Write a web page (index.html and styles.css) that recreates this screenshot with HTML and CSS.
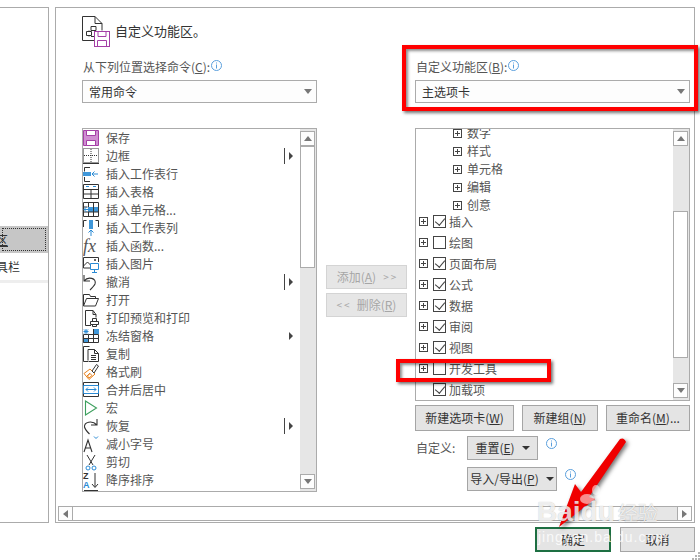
FILE: index.html
```html
<!DOCTYPE html>
<html lang="zh">
<head>
<meta charset="utf-8">
<title>自定义功能区</title>
<link rel="stylesheet" href="styles.css">
</head>
<body>
<div class="dialog">
  <div class="panels">
    <nav class="side">
      <div class="side-item side-selected"><span class="side-text"><u>自定义功能区</u></span></div>
      <div class="side-item"><span class="side-text side-text2">快速访问工具栏</span></div>
      <div class="side-strip"></div>
    </nav>
    <main class="main">
      <header class="head">
        <svg class="head-icon" viewBox="0 0 28 31">
          <path class="ln" d="M12 24.500H.5V.5H13l7 7v7M13 .5v7h7"/>
          <path class="ln" d="M9 10.500h5v4H9zM4.500 15.500h5v4h-5zM9 20.500h3M7 14.500v1M7 19.500v1"/>
          <rect class="sv" x="12.500" y="15.500" width="15" height="15"/>
          <path class="sv" d="M16 15.500v5h8v-5M15.500 30.500v-6h9v6"/>
        </svg>
        <span class="head-title">自定义功能区。</span>
      </header>
      <div class="cols">
        <section class="col-left">
          <div class="label"><span>从下列位置选择命令(<u>C</u>):</span><svg class="info" viewBox="0 0 11 11"><circle cx="5.500" cy="5.500" r="5"/><path d="M5.500 2.500v1M5.500 4.500v4"/></svg></div>
          <div class="select"><span>常用命令</span><i class="tri"></i></div>
          <div class="list list-left">
            <ul class="rows">
              <li class="row"><svg class="ic" viewBox="0 0 16 17"><path fill="#d08ed2" stroke="#a43fa6" d="M.5.500h15v15H.5z"/><path fill="#fff" stroke="#a43fa6" d="M3.500.500h9v5h-9zM3.500 10.500h9v5h-9z"/></svg>保存</li>
              <li class="row"><svg class="ic" viewBox="0 0 16 17"><path class="dot" d="M.5.500h15v14H.5zM8 1v14M1 7.500h14"/><path class="ln" d="M0 15.500h16"/></svg>边框<span class="sub sub-split"></span></li>
              <li class="row"><svg class="ic" viewBox="0 0 16 17"><path class="ln" d="M7 1.500H1.500v4M1.500 11v4.500H7"/><path class="bl" d="M0 6h8v4H0z"/><path class="ar" d="M15 8H9M11.500 5.500 9 8l2.500 2.500"/></svg>插入工作表行</li>
              <li class="row"><svg class="ic" viewBox="0 0 16 17"><path class="ln" d="M.5.500h15v14H.5zM.5 5.500h15M.5 10h15M8 5.500v9"/><path class="ar" d="M3 2.500h3M10 2.500h3"/></svg>插入表格</li>
              <li class="row"><svg class="ic" viewBox="0 0 16 17"><path class="bl" d="M5 5h10v5H5z"/><path class="ln" d="M.5.500h15v14H.5zM.5 5h4M.5 10h15M5.500.5V5M5.500 10v4.500M10.500.5v14"/><path class="ar" d="M9 7.500H1M3.500 5 1 7.500 3.500 10"/></svg>插入单元格...</li>
              <li class="row"><svg class="ic" viewBox="0 0 16 17"><path class="ln" d="M.5 7V.5h3M15.500 7V.5h-3"/><path class="bl" d="M6 0h4v9H6z"/><path class="ar" d="M8 16v-6M5.500 12.500 8 10l2.500 2.500"/></svg>插入工作表列</li>
              <li class="row"><svg class="ic" viewBox="0 0 16 17"><text class="fx" x="0" y="14">fx</text></svg>插入函数...</li>
              <li class="row"><svg class="ic" viewBox="0 0 16 17"><path class="ln" d="M7 12H.5V1.500H15.500V6M.5 10l4-4 3 3"/><path class="ar" d="M7.500 7.500h8v6h-8zM11.500 13.500v3M9 16.500h5"/><circle cx="12" cy="4" r="1" fill="#333"/></svg>插入图片</li>
              <li class="row"><svg class="ic" viewBox="0 0 16 17"><path class="ln2" d="M1 1v6h6M1 7c4-5 13-3 11 3-1 2-3 4-5 6"/></svg>撤消<span class="sub sub-split"></span></li>
              <li class="row"><svg class="ic" viewBox="0 0 16 17"><path class="ln" d="M.5 14V2.500h6l1 2h5V7M.5 14 3.500 6.500H15.500L12.500 14z"/></svg>打开</li>
              <li class="row"><svg class="ic" viewBox="0 0 16 17"><path class="ln" d="M8 15.500H2.500V.5H10l3 4v3M10 .5v4h3"/><path class="ln" d="M7.500 11.500h8v3h-8zM9.500 11.500v-3h4v3M9.500 14.500v2h4v-2"/></svg>打印预览和打印</li>
              <li class="row"><svg class="ic" viewBox="0 0 16 17"><path class="bl" d="M10 1h6v5h-6zM0 10h5v5H0z"/><path class="ln" d="M5.500 6.500h10v8H.5v-8h5zM5.500 6.500v8M10.500 1v13.500M.5 10.500h15"/><path class="ar" d="M3 1v5M.5 3.500h5M1 1.500l4 4M5 1.500l-4 4"/></svg>冻结窗格<span class="sub"></span></li>
              <li class="row"><svg class="ic" viewBox="0 0 16 17"><path class="ln" d="M5 15.500H.5V.5h6M5 14.500V3.500h6.500l4 4v8h-10M11.500 3.500v4h4M8 9.500h5M8 11.500h5M8 13.500h5"/></svg>复制</li>
              <li class="row"><svg class="ic" viewBox="0 0 16 17"><path class="or" d="M1 9.500 7 5l5 5-6 5.500zM4 12l3-3"/><path class="or" d="M4.500 12 7 9.500 9 11.500 6 14z" fill="#f0a030"/><path class="ln" d="m9 7 4.500-6.500 2 1.500L11 9z"/></svg>格式刷</li>
              <li class="row"><svg class="ic" viewBox="0 0 16 17"><path class="ln" d="M.5.500h15v14H.5z"/><path class="ar" d="M.5 3.500h15v8H.5zM3 7.500h10M5 5.500l-2 2 2 2M11 5.500l2 2-2 2"/></svg>合并后居中</li>
              <li class="row"><svg class="ic" viewBox="0 0 16 17"><path fill="none" stroke="#3c9f5d" stroke-width="1.100" d="M2.500 1v14l11-7z"/></svg>宏</li>
              <li class="row"><svg class="ic" viewBox="0 0 16 17"><path class="ln2" d="M14 1v6H8M14 7C9 2 1 4 1.500 9c.5 2 3 5 5 7"/></svg>恢复<span class="sub sub-split"></span></li>
              <li class="row"><svg class="ic" viewBox="0 0 16 17"><path class="ln2" d="m1 16 4-12 4 12M2.500 12h5"/><path class="ar" d="m11 .5 2 2 2-2"/></svg>减小字号</li>
              <li class="row"><svg class="ic" viewBox="0 0 16 17"><path class="ln" d="m4 1 6 10M12 1 6 11"/><circle class="ar" cx="5" cy="14" r="2"/><circle class="ar" cx="11" cy="14" r="2"/></svg>剪切</li>
              <li class="row"><svg class="ic" viewBox="0 0 16 17"><text class="za" x="0" y="7">Z</text><text class="za za-b" x="0" y="16">A</text><path class="ln" d="M12 1v14M9 12l3 3.500 3-3.500"/></svg>降序排序</li>
              <li class="row"><svg class="ic" viewBox="0 0 16 17"><path class="ln" d="M1 .5h14"/></svg></li>
            </ul>
            <div class="vscroll">
              <div class="sb-btn"><i class="tri tri-up"></i></div>
              <div class="thumb thumb-left"></div>
              <div class="track"></div>
              <div class="sb-btn"><i class="tri"></i></div>
            </div>
          </div>
        </section>
        <section class="col-mid">
          <div class="mid-btn">添加(<u>A</u>)<span class="chev chev-r">&gt;&gt;</span></div>
          <div class="mid-btn"><span class="chev chev-l">&lt;&lt;</span>删除(<u>R</u>)</div>
        </section>
        <section class="col-right">
          <div class="label"><span>自定义功能区(<u>B</u>):</span><svg class="info" viewBox="0 0 11 11"><circle cx="5.500" cy="5.500" r="5"/><path d="M5.500 2.500v1M5.500 4.500v4"/></svg></div>
          <div class="select"><span>主选项卡</span><i class="tri"></i></div>
          <div class="list list-right">
            <ul class="tree">
              <li class="child"><i class="plus"></i>数字</li>
              <li class="child"><i class="plus"></i>样式</li>
              <li class="child"><i class="plus"></i>单元格</li>
              <li class="child"><i class="plus"></i>编辑</li>
              <li class="child child-last"><i class="plus"></i>创意</li>
              <li class="top"><i class="plus"></i><i class="check on"></i>插入</li>
              <li class="top"><i class="plus"></i><i class="check"></i>绘图</li>
              <li class="top"><i class="plus"></i><i class="check on"></i>页面布局</li>
              <li class="top"><i class="plus"></i><i class="check on"></i>公式</li>
              <li class="top"><i class="plus"></i><i class="check on"></i>数据</li>
              <li class="top"><i class="plus"></i><i class="check on"></i>审阅</li>
              <li class="top"><i class="plus"></i><i class="check on"></i>视图</li>
              <li class="top"><i class="plus"></i><i class="check"></i>开发工具</li>
              <li class="top"><i class="plus plus-none"></i><i class="check on"></i>加载项</li>
            </ul>
            <div class="vscroll">
              <div class="sb-btn"><i class="tri tri-up"></i></div>
              <div class="track track-top"></div>
              <div class="thumb thumb-right"></div>
              <div class="track"></div>
              <div class="sb-btn"><i class="tri"></i></div>
            </div>
          </div>
          <div class="btn-row">
            <div class="btn btn-new">新建选项卡(<u>W</u>)</div>
            <div class="btn btn-group">新建组(<u>N</u>)</div>
            <div class="btn btn-rename">重命名(<u>M</u>)...</div>
          </div>
          <div class="cust-row">
            <span class="cust-label">自定义:</span>
            <div class="btn btn-reset">重置(<u>E</u>)<i class="caret"></i></div>
            <svg class="info info-lg" viewBox="0 0 11 11"><circle cx="5.500" cy="5.500" r="5"/><path d="M5.500 2.500v1M5.500 4.500v4"/></svg>
          </div>
          <div class="cust-row cust-row2">
            <div class="btn btn-io">导入/导出(<u>P</u>)<i class="caret"></i></div>
            <svg class="info info-lg" viewBox="0 0 11 11"><circle cx="5.500" cy="5.500" r="5"/><path d="M5.500 2.500v1M5.500 4.500v4"/></svg>
          </div>
        </section>
      </div>
      <div class="hscroll">
        <div class="hs-btn"><i class="tri tri-left"></i></div>
        <div class="hs-thumb"></div>
        <div class="hs-track"></div>
        <div class="hs-btn"><i class="tri tri-right"></i></div>
      </div>
    </main>
  </div>
  <footer class="foot">
    <div class="btn btn-ok">确定</div>
    <div class="btn btn-cancel">取消</div>
  </footer>
</div>
<svg class="grip" viewBox="0 0 8 8"><path d="M6 0h2v2H6zM3 3h2v2H3zM6 3h2v2H6zM0 6h2v2H0zM3 6h2v2H3zM6 6h2v2H6z"/></svg>
<div class="mark mark-top"></div>
<div class="mark mark-dev"></div>
<svg class="arrow" viewBox="0 0 700 560"><path fill="#f00000" d="M559 527 575 484l6 8 39-53q4-2 6 3l-37 55 6 2z"/></svg>
<svg class="paw" viewBox="0 0 700 560"><ellipse cx="587" cy="499" rx="7" ry="5"/><ellipse cx="596" cy="490" rx="4" ry="5"/><ellipse cx="607" cy="492" rx="4" ry="5"/><ellipse cx="613" cy="502" rx="3" ry="4"/><ellipse cx="603" cy="509" rx="8" ry="7"/></svg>
<div class="wm wm-big">Baidu<span class="wm-cn">经验</span></div>
<div class="wm wm-small">jingyan.baidu.com</div>
</body>
</html>
```
FILE: styles.css
```css
* { box-sizing: border-box; }
html, body { margin: 0; padding: 0; }
body {
  width: 700px;
  height: 560px;
  overflow: hidden;
  position: relative;
  background: #fff;
  color: #444;
  font: 12px/16px "Noto Sans CJK SC", "Noto Sans", sans-serif;
}
ul { list-style: none; margin: 0; padding: 0; }
u { text-underline-offset: 1px; }
i { display: block; font-style: normal; }

.dialog { padding-top: 7px; }
.panels { display: flex; gap: 6px; }

.side {
  width: 49px;
  height: 516px;
  padding-top: 218px;
  border: 1px solid #ababab;
  border-left: 0;
  background: #fff;
  overflow: hidden;
}
.side-item { height: 27px; line-height: 27px; white-space: nowrap; color: #333; }
.side-selected { background: #c6c6c6; outline: 1px dotted #333; outline-offset: -3px; }
.side-text { display: block; margin-left: -64px; }
.side-strip { height: 3px; background: #eee; }

.main {
  width: 640px;
  height: 516px;
  padding-top: 8px;
  border: 1px solid #ababab;
}
.head { display: flex; align-items: center; gap: 6px; height: 30px; margin: 0 0 13px 26px; }
.head-icon { width: 28px; height: 31px; flex: none; margin-top: 1px; margin-right: -1px; }
.head-title { font-size: 13px; color: #333; }

.ln { fill: none; stroke: #333; stroke-width: 1; }
.ln2 { fill: none; stroke: #333; stroke-width: 1.100; }
.sv { fill: none; stroke: #a43fa6; stroke-width: 1; }
.dot { fill: none; stroke: #333; stroke-dasharray: 1 1; }
.bl { fill: #3f97d9; }
.ar { fill: none; stroke: #2a8ad4; stroke-width: 1; }
.or { fill: none; stroke: #e8821e; stroke-width: 1; }
.fx { font: italic 18px "Liberation Serif", serif; fill: #555; }
.za { font: bold 9px "Liberation Sans", sans-serif; fill: #333; }
.za-b { fill: #2a8ad4; }

.cols { display: flex; padding-left: 26px; height: 433px; }
.col-left { width: 235px; flex: none; }
.col-mid { width: 81px; margin: 0 8px 0 9px; padding-top: 206px; flex: none; display: flex; flex-direction: column; gap: 4px; }
.col-right { width: 275px; flex: none; }

.label { display: flex; align-items: flex-start; gap: 1px; height: 16px; margin-left: 1px; margin-bottom: 5px; color: #555; }
.info { width: 11px; height: 11px; flex: none; margin-top: 1px; fill: none; stroke: #5a9fdc; stroke-width: 1; }
.info-lg { width: 11px; height: 11px; margin-top: 0; }

.select {
  display: flex;
  justify-content: space-between;
  align-items: center;
  height: 23px;
  padding: 0 3px 0 6px;
  border: 1px solid #ababab;
  background: #fdfdfd;
  margin-bottom: 25px;
  color: #333;
}
.tri { width: 0; height: 0; border-left: 4px solid transparent; border-right: 4px solid transparent; border-top: 5px solid #777; }
.select .tri { margin-right: 1px; }
.tri-up { border-top: 0; border-bottom: 5px solid #777; }
.tri-left { border: 0; border-top: 4px solid transparent; border-bottom: 4px solid transparent; border-right: 5px solid #777; }
.tri-right { border: 0; border-top: 4px solid transparent; border-bottom: 4px solid transparent; border-left: 5px solid #777; }

.list { display: flex; border: 1px solid #ababab; background: #fff; overflow: hidden; }
.list-left { height: 364px; }
.list-right { height: 273px; }

.rows { flex: 1; min-width: 0; height: 362px; overflow: hidden; }
.row { position: relative; display: flex; align-items: center; height: 18px; padding-left: 0; color: #555; white-space: nowrap; }
.ic { width: 16px; height: 17px; flex: none; margin-right: 7px; overflow: visible; }
.sub { position: absolute; left: 206px; top: 5px; width: 0; height: 0; border-top: 4px solid transparent; border-bottom: 4px solid transparent; border-left: 4px solid #444; }
.sub-split::before { content: ""; position: absolute; left: -9px; top: -8px; width: 1px; height: 16px; background: #444; }

.vscroll { width: 16px; flex: none; display: flex; flex-direction: column; background: #e6e6e6; padding-top: 2px; padding-bottom: 2px; }
.sb-btn { width: 15px; height: 15px; flex: none; display: flex; align-items: center; justify-content: center; background: #fdfdfd; border: 1px solid #ababab; }
.thumb { flex: none; background: #fff; border: 1px solid #ababab; width: 15px; }
.thumb-left { height: 122px; }
.thumb-right { height: 147px; }
.track { flex: 1; }
.track-top { flex: none; height: 65px; }

.mid-btn { height: 24px; display: flex; align-items: center; justify-content: center; background: #e6e6e6; border: 1px solid #d4d4d4; color: #a6a6a6; white-space: nowrap; }
.chev { font-size: 10px; letter-spacing: 2px; }
.chev-r { margin-left: 7px; margin-right: -2px; }
.chev-l { margin-right: 5px; }

.tree { flex: 1; min-width: 0; margin-top: -5px; color: #555; white-space: nowrap; }
.child { display: flex; align-items: center; height: 18px; padding-left: 37px; gap: 5px; }
.child-last { margin-bottom: -3px; }
.top { display: flex; align-items: center; height: 21px; padding-left: 3px; }
.plus {
  position: relative;
  width: 9px;
  height: 9px;
  flex: none;
  border: 1px solid #444;
  background: linear-gradient(#444, #444) center / 5px 1px no-repeat, linear-gradient(#444, #444) center / 1px 5px no-repeat;
}
.plus-none { visibility: hidden; }
.check { position: relative; width: 13px; height: 13px; flex: none; margin: 0 3px 0 5px; border: 1px solid #444; background: #fff; }
.check.on::after { content: ""; position: absolute; left: 3px; top: 0; width: 5px; height: 8px; border: solid #444; border-width: 0 1px 1px 0; transform: rotate(40deg); }

.btn-row { display: flex; gap: 8px; margin-top: 4px; }
.btn {
  display: flex;
  align-items: center;
  justify-content: center;
  height: 26px;
  background: #e4e4e4;
  border: 1px solid #a5a5a5;
  color: #333;
  white-space: nowrap;
}
.btn-new { width: 99px; }
.btn-group { width: 76px; }
.btn-rename { width: 84px; }

.cust-row { display: flex; align-items: flex-start; margin-top: 5px; height: 24px; }
.cust-row2 { margin-top: 7px; padding-left: 52px; }
.cust-label { width: 52px; padding-left: 1px; line-height: 24px; color: #555; }
.btn-reset { width: 71px; height: 24px; }
.btn-io { width: 90px; height: 24px; }
.caret { width: 0; height: 0; margin-left: 7px; border-left: 4px solid transparent; border-right: 4px solid transparent; border-top: 4px solid #333; }
.cust-row .info { margin: 2px 0 0 8px; }

.hscroll { display: flex; margin: 14px 0 0 2px; width: 634px; height: 15px; border: 1px solid #ababab; background: #e6e6e6; }
.hs-btn { width: 14px; flex: none; display: flex; align-items: center; justify-content: center; background: #fdfdfd; border-right: 1px solid #ababab; }
.hs-btn:last-child { border-right: 0; border-left: 1px solid #ababab; }
.hs-thumb { width: 547px; background: #fff; }
.hs-track { flex: 1; }

.foot { display: flex; justify-content: flex-end; gap: 9px; margin-top: 4px; padding-right: 5px; }
.btn-ok { width: 76px; height: 25px; border: 2px solid #1d6f42; }
.btn-cancel { width: 75px; height: 25px; }

.grip { position: absolute; left: 692px; top: 552px; width: 8px; height: 8px; fill: #b5b5b5; }

.mark { position: absolute; border: 4px solid #f00; box-shadow: 2px 2px 3px rgba(0, 0, 0, .55), inset 2px 2px 3px rgba(0, 0, 0, .45); }
.mark-top { left: 402px; top: 45px; width: 296px; height: 66px; }
.mark-dev { left: 396px; top: 359px; width: 155px; height: 23px; }

.arrow { position: absolute; left: 0; top: 0; width: 700px; height: 560px; filter: drop-shadow(2px 2px 2px rgba(0, 0, 0, .55)); }
.paw { position: absolute; left: 0; top: 0; width: 700px; height: 560px; fill: rgba(255, 255, 255, .55); }

.wm { position: absolute; color: rgba(255, 255, 255, .8); white-space: nowrap; text-shadow: 0 0 1px rgba(0, 0, 0, .3); }
.wm-big { left: 537px; top: 497px; font: bold 28px/30px "Liberation Sans", sans-serif; }
.wm-cn { font: 20px/30px "Noto Sans CJK SC", sans-serif; margin-left: 3px; }
.wm-small { left: 538px; top: 528px; font: 14px/18px "Liberation Sans", sans-serif; letter-spacing: 1px; text-shadow: none; }
```
